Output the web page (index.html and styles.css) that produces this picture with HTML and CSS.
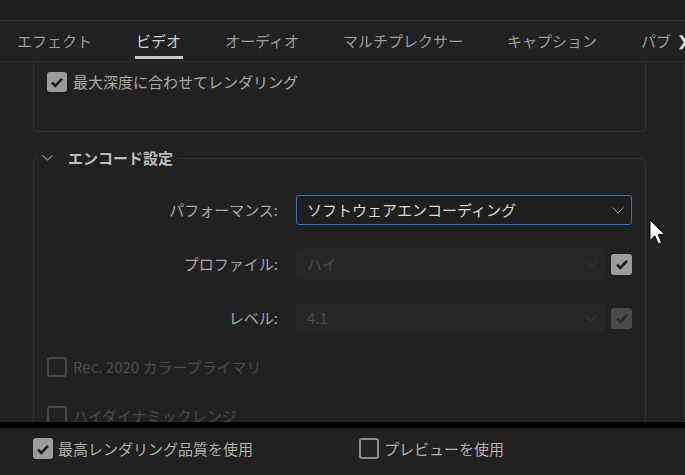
FILE: index.html
```html
<!DOCTYPE html>
<html lang="ja">

<head>
    <meta charset="UTF-8" />
    <meta name="viewport" content="width=device-width, initial-scale=1.0" />
    <title>書き出し設定 - ビデオ</title>
    <link rel="stylesheet" href="styles.css">
</head>

<body>
    <div class="topbar"></div>

    <nav class="tabs">
        <div class="tab-list">
            <span class="tab">エフェクト</span>
            <span class="tab active">ビデオ</span>
            <span class="tab">オーディオ</span>
            <span class="tab">マルチプレクサー</span>
            <span class="tab">キャプション</span>
            <span class="tab">パブリッシュ</span>
        </div>
        <span class="tab-more">❯</span>
    </nav>

    <main class="content">
        <!-- 上にスクロールされたセクションの残り -->
        <div class="section section-tail">
            <label class="check-row">
                <span class="check on">
                    <svg viewBox="0 0 20 20"><path d="M5 10.5l3.3 3.3L15 6.8" /></svg>
                </span>
                最大深度に合わせてレンダリング
            </label>
        </div>

        <fieldset class="section">
            <legend>
                <svg class="fold" viewBox="0 0 11 6"><path d="M0.5 0.5L5.5 5L10.5 0.5" /></svg>
                エンコード設定
            </legend>

            <div class="section-body">
                <div class="field">
                    <span class="field-label">パフォーマンス:</span>
                    <div class="select focus">
                        <span>ソフトウェアエンコーディング</span>
                        <svg class="caret" viewBox="0 0 12 7"><path d="M0.5 0.5L6 6L11.5 0.5" /></svg>
                    </div>
                </div>

                <div class="field">
                    <span class="field-label">プロファイル:</span>
                    <div class="select disabled">
                        <span>ハイ</span>
                        <svg class="caret" viewBox="0 0 12 7"><path d="M0.5 0.5L6 6L11.5 0.5" /></svg>
                    </div>
                    <span class="check on small">
                        <svg viewBox="0 0 20 20"><path d="M5 10.5l3.3 3.3L15 6.8" /></svg>
                    </span>
                </div>

                <div class="field">
                    <span class="field-label">レベル:</span>
                    <div class="select disabled">
                        <span>4.1</span>
                        <svg class="caret" viewBox="0 0 12 7"><path d="M0.5 0.5L6 6L11.5 0.5" /></svg>
                    </div>
                    <span class="check on small dim">
                        <svg viewBox="0 0 20 20"><path d="M5 10.5l3.3 3.3L15 6.8" /></svg>
                    </span>
                </div>

                <label class="check-row muted rec">
                    <span class="check off"></span>
                    Rec. 2020 カラープライマリ
                </label>

                <label class="check-row muted hdr">
                    <span class="check off"></span>
                    ハイダイナミックレンジ
                </label>
            </div>
        </fieldset>
    </main>

    <div class="divider"></div>

    <footer class="footer">
        <label class="check-row">
            <span class="check on">
                <svg viewBox="0 0 20 20"><path d="M5 10.5l3.3 3.3L15 6.8" /></svg>
            </span>
            最高レンダリング品質を使用
        </label>
        <label class="check-row preview">
            <span class="check empty"></span>
            プレビューを使用
        </label>
    </footer>

    <svg class="cursor" viewBox="0 0 17 27">
        <path d="M1 1V21.5L5.8 16.8L9.3 25L12.6 23.6L9.2 15.6H15.8Z" />
    </svg>
</body>

</html>
```

FILE: styles.css
```css
html,
body {
    margin: 0;
    height: 475px;
    overflow: hidden;
}

body {
    position: relative;
    background-color: #212121;
    color: #a9a9a9;
    font-family: "Noto Sans CJK JP", "Noto Sans", sans-serif;
    font-size: 15px;
    line-height: 20px;
}

.topbar {
    height: 20px;
    background-color: #1f1f1f;
}

/* タブ */
.tabs {
    display: flex;
    height: 40px;
    border-top: 1px solid #2c2c2c;
    border-bottom: 1px solid #2c2c2c;
    color: #9c9c9c;
}

.tab-list {
    flex: 1;
    display: flex;
    gap: 44px;
    padding-left: 17px;
    overflow: hidden;
    white-space: nowrap;
}

.tab {
    position: relative;
    height: 40px;
    line-height: 40px;
}

.tab.active {
    color: #d2d2d2;
}

.tab.active::after {
    content: "";
    position: absolute;
    left: -1px;
    right: -2px;
    bottom: 2px;
    height: 3px;
    background-color: #c8c8c8;
}

.tab-more {
    flex: none;
    width: 8px;
    padding-left: 6px;
    line-height: 40px;
    overflow: hidden;
    color: #e0e0e0;
    font-family: "DejaVu Sans", sans-serif;
    font-size: 14px;
    font-weight: bold;
}

/* 本体 */
.content {
    height: 360px;
    padding: 0 37px 0 33px;
    border-right: 2px solid #2a2a2a;
    overflow: hidden;
}

.section {
    margin: 0;
    padding: 0;
    min-width: 0;
    border: 1px solid #303030;
    border-radius: 4px;
}

.section-tail {
    height: 70px;
    box-sizing: border-box;
    padding: 10px 13px 0;
    border-top: none;
    border-radius: 0 0 4px 4px;
}

fieldset.section {
    margin-top: 15px;
}

legend {
    display: flex;
    align-items: center;
    margin-left: 4px;
    padding: 0 5px 0 4px;
    line-height: 22px;
    color: #bdbdbd;
    font-weight: bold;
}

.fold {
    width: 11px;
    height: 6px;
    margin-right: 15px;
    fill: none;
    stroke: #8a8a8a;
    stroke-width: 1.2;
}

.section-body {
    padding: 26px 13px 40px;
}

.field {
    display: flex;
    align-items: center;
    height: 30px;
}

.field+.field {
    margin-top: 24px;
}

.field-label {
    width: 231px;
    margin-right: 18px;
    text-align: right;
    color: #a6a6a6;
}

.select {
    flex: 1;
    display: flex;
    align-items: center;
    justify-content: space-between;
    height: 30px;
    box-sizing: border-box;
    padding: 0 7px 0 10px;
    border: 1px solid transparent;
    border-radius: 3px;
}

.select.focus {
    border-color: #3b6ea6;
    background-color: #1f1f1f;
    color: #d8d8d8;
}

.select.disabled {
    background-color: #262626;
    color: #4a4a4a;
}

.caret {
    width: 12px;
    height: 7px;
    fill: none;
    stroke: #a0a0a0;
    stroke-width: 1;
}

.select.disabled .caret {
    stroke: #3a3a3a;
}

/* チェックボックス */
.check-row {
    display: flex;
    align-items: center;
    gap: 6px;
    height: 20px;
}

.check {
    display: flex;
    align-items: center;
    justify-content: center;
    flex: none;
    width: 20px;
    height: 20px;
    box-sizing: border-box;
    border-radius: 3px;
}

.check svg {
    width: 20px;
    height: 20px;
    fill: none;
    stroke: #1d1d1d;
    stroke-width: 2.6;
}

.check.on {
    background-color: #9c9c9c;
}

.check.small {
    width: 21px;
    height: 21px;
    margin-left: 6px;
}

.check.dim {
    background-color: #4a4a4a;
}

.check.dim svg {
    stroke: #282828;
}

.check.off {
    border: 2px solid #464646;
}

.check.empty {
    border: 2px solid #8c8c8c;
}

.muted {
    color: #4a4a4a;
}

.rec {
    margin-top: 24px;
}

.hdr {
    margin-top: 29px;
}

.divider {
    height: 6px;
    background-color: #000;
}

.footer {
    display: flex;
    align-items: center;
    height: 41px;
    padding: 0 0 0 33px;
    color: #b0b0b0;
}

.footer .check-row {
    width: 329px;
    gap: 5px;
}

.footer .check {
    height: 21px;
}

.cursor {
    position: absolute;
    left: 649px;
    top: 219px;
    width: 17px;
    height: 27px;
    fill: #fff;
    stroke: #000;
    stroke-width: 1;
}
```
